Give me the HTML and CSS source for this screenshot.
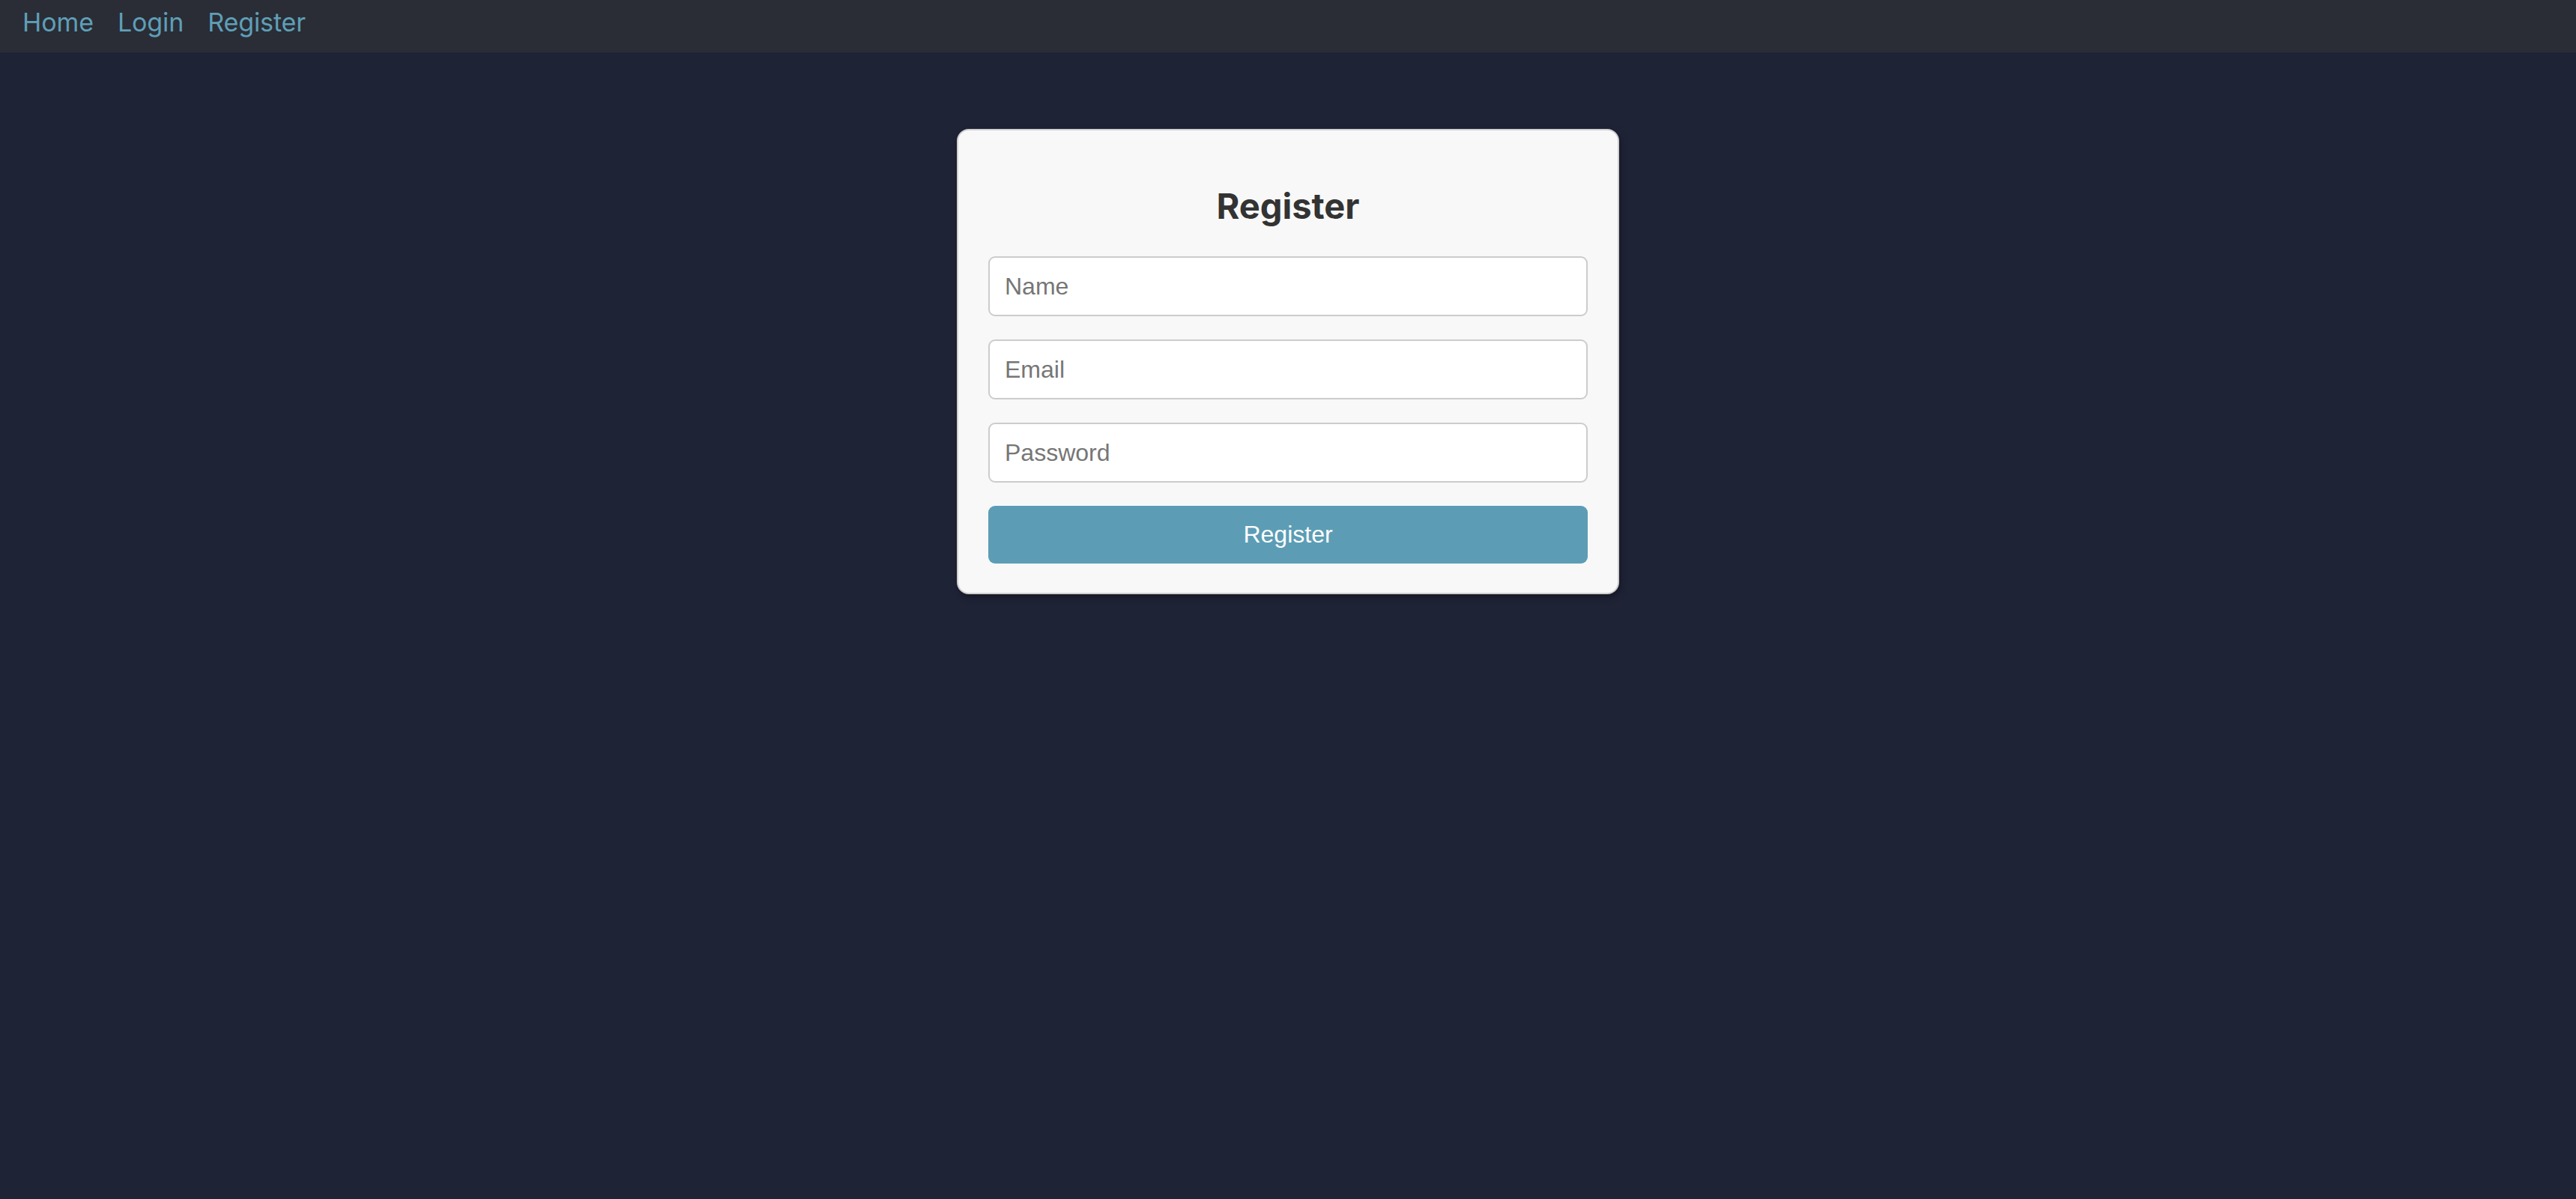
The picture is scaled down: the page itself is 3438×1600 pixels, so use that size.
FILE: index.html
```html
<!DOCTYPE html>
<html lang="en">
<head>
<meta charset="utf-8">
<title>Register</title>
<link rel="stylesheet" href="styles.css">
</head>
<body>
<nav class="navbar">
  <a class="nav-link" href="#">Home</a>
  <a class="nav-link" href="#">Login</a>
  <a class="nav-link" href="#">Register</a>
</nav>
<main class="page">
  <form class="card">
    <h2 class="card-title">Register</h2>
    <input class="field" type="text" placeholder="Name">
    <input class="field" type="email" placeholder="Email">
    <input class="field" type="password" placeholder="Password">
    <button class="submit" type="button">Register</button>
  </form>
</main>
</body>
</html>
```

FILE: styles.css
```css
html, body {
  margin: 0;
  padding: 0;
}
body {
  background: #1f2336;
  min-height: 100vh;
  font-family: Inter, "Liberation Sans", sans-serif;
}
.navbar {
  box-sizing: border-box;
  height: 70px;
  background: #2a2d36;
  display: flex;
  align-items: flex-start;
  gap: 32px;
  padding: 8px 0 0 30px;
}
.nav-link {
  color: #5f9fb7;
  text-decoration: none;
  font-size: 34px;
  letter-spacing: -0.1px;
  line-height: 44px;
}
.page {
  display: flex;
  justify-content: center;
  padding-top: 102px;
}
.card {
  box-sizing: border-box;
  width: 884px;
  background: #f8f8f8;
  border: 2px solid #cfcfcf;
  border-radius: 16px;
  padding: 40px 40px 39px;
  box-shadow: 2px 4px 10px rgba(0, 0, 0, 0.35);
  display: flex;
  flex-direction: column;
}
.card-title {
  margin: 31px 0 38px;
  text-align: center;
  font-family: Inter, "Liberation Sans", sans-serif;
  font-weight: 700;
  font-size: 47px;
  line-height: 59px;
  color: #333333;
}
.field {
  box-sizing: border-box;
  height: 80px;
  width: 100%;
  margin: 0 0 31px;
  padding: 0 20px;
  border: 2px solid #cccccc;
  border-radius: 9px;
  background: #ffffff;
  font-family: "Liberation Sans", Arial, sans-serif;
  font-size: 32px;
  color: #333;
  outline: none;
}
.field::placeholder {
  color: #767676;
}
.submit {
  box-sizing: border-box;
  height: 77px;
  width: 100%;
  border: none;
  border-radius: 9px;
  background: #5c9db5;
  color: #ffffff;
  font-family: "Liberation Sans", Arial, sans-serif;
  font-size: 32px;
  cursor: pointer;
}
```
